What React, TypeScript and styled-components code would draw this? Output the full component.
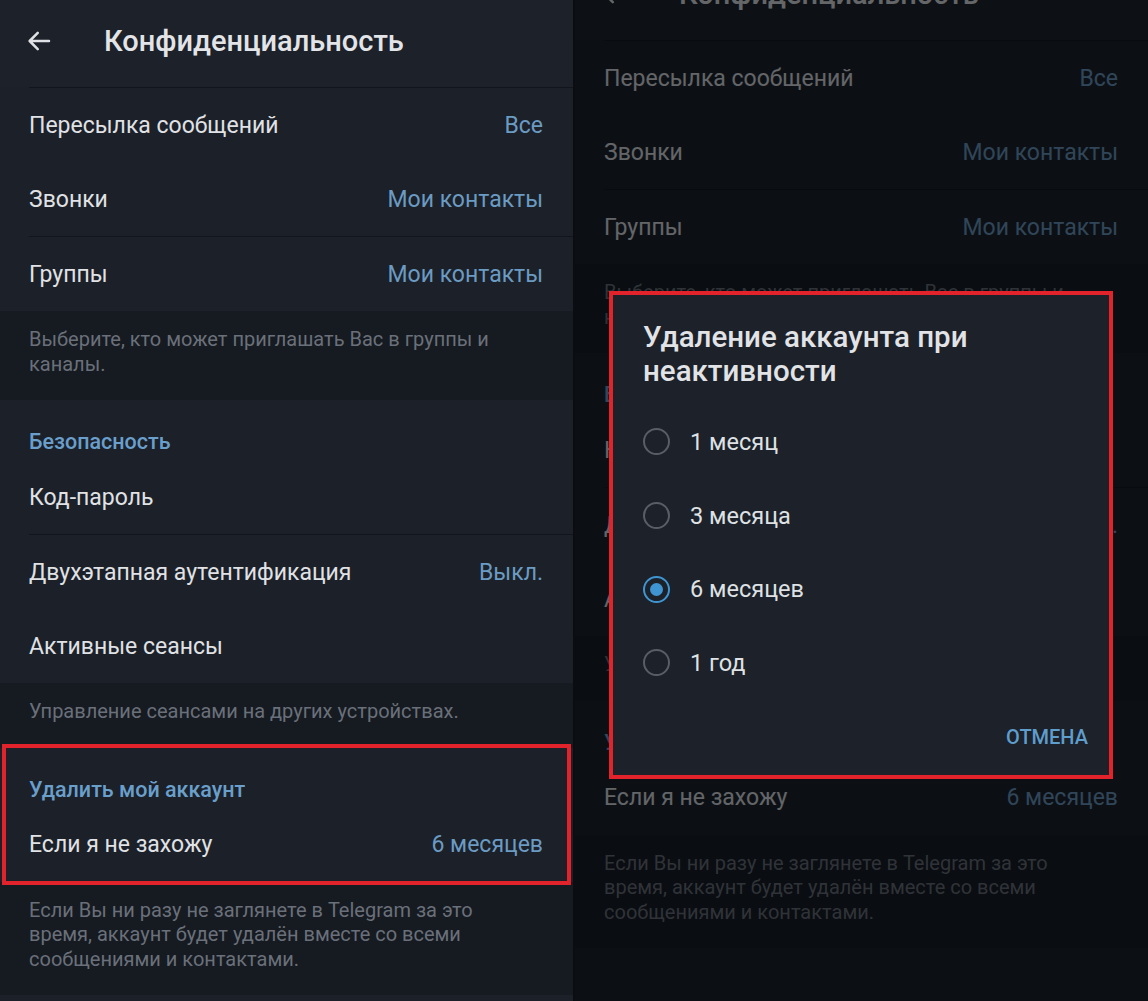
import React from 'react';
import styled, { createGlobalStyle } from 'styled-components';

const GlobalStyle = createGlobalStyle`
  html, body {
    margin: 0;
    padding: 0;
    background: #0b0d11;
  }
  body {
    font-family: Roboto, 'Noto Sans', 'Liberation Sans', sans-serif;
    -webkit-font-smoothing: antialiased;
  }
`;

const Page = styled.div`
  display: flex;
  flex-direction: row;
  gap: 2px;
  width: 1148px;
  height: 1001px;
  overflow: hidden;
  background: #0b0d11;
`;

const Phone = styled.div`
  position: relative;
  width: 573px;
  height: 1001px;
  overflow: hidden;
  background: #161a21;
`;

const Screen = styled.div<{ $offset: number }>`
  display: flex;
  flex-direction: column;
  margin-top: ${(p) => -p.$offset}px;
`;

const Header = styled.div`
  display: flex;
  align-items: center;
  box-sizing: border-box;
  height: 87px;
  padding: 0 0 5px 24px;
  background: #1c212a;
`;

const BackButton = styled.div`
  display: flex;
  align-items: center;
  width: 30px;
  height: 30px;
  margin-right: 50px;
  color: #dfe1e4;
`;

const Title = styled.h1`
  margin: 0;
  font-size: 29px;
  font-weight: 500;
  color: #e2e4e7;
`;

const Section = styled.div<{ $highlight?: boolean }>`
  position: relative;
  display: flex;
  flex-direction: column;
  background: #1b2029;
  &::after {
    content: '';
    display: ${(p) => (p.$highlight ? 'block' : 'none')};
    position: absolute;
    top: -4px;
    bottom: -3px;
    left: 2px;
    right: 2px;
    border: 4px solid #e3232b;
    pointer-events: none;
  }
`;

const SectionHeader = styled.div`
  padding: 30px 29px 6px;
  line-height: 24px;
  font-size: 21.5px;
  font-weight: 500;
  color: #6a9fcb;
`;

const Row = styled.div`
  display: flex;
  align-items: center;
  justify-content: space-between;
  height: 74px;
  padding: 0 30px 0 29px;
`;

const RowLabel = styled.span`
  font-size: 23px;
  color: #e0e2e5;
`;

const RowValue = styled.span`
  font-size: 23px;
  color: #6b9bc2;
`;

const Divider = styled.div`
  height: 1px;
  margin-left: 29px;
  background: #12161c;
`;

const Info = styled.div`
  padding: 16px 30px 24px 29px;
  font-size: 20px;
  line-height: 24.5px;
  color: #6a707a;
  background: #161a21;
`;

const Overlay = styled.div`
  position: absolute;
  inset: 0;
  background: rgba(2, 3, 5, 0.56);
`;

const Dialog = styled.div`
  position: absolute;
  left: 34px;
  top: 291px;
  width: 504px;
  height: 488px;
  box-sizing: border-box;
  display: flex;
  flex-direction: column;
  padding: 25px 21px 0 30px;
  background: #1c212a;
  border: 4px solid #e3232b;
`;

const DialogTitle = styled.h2`
  flex-shrink: 0;
  margin: 0 0 17px;
  font-size: 29.5px;
  line-height: 34px;
  font-weight: 500;
  color: #e1e3e6;
`;

const Option = styled.div`
  display: flex;
  flex-shrink: 0;
  align-items: center;
  height: 73.7px;
`;

const Radio = styled.span<{ $checked?: boolean }>`
  display: flex;
  align-items: center;
  justify-content: center;
  box-sizing: border-box;
  width: 27px;
  height: 27px;
  margin-right: 20px;
  border-radius: 50%;
  border: 2.5px solid ${(p) => (p.$checked ? '#3f95d1' : '#595e66')};
  &::after {
    content: '';
    display: ${(p) => (p.$checked ? 'block' : 'none')};
    width: 13px;
    height: 13px;
    border-radius: 50%;
    background: #3f95d1;
  }
`;

const OptionLabel = styled.span`
  font-size: 23.5px;
  color: #dfe1e4;
`;

const DialogActions = styled.div`
  display: flex;
  flex: 1;
  justify-content: flex-end;
  align-items: center;
`;

const TextButton = styled.span`
  font-size: 20px;
  font-weight: 500;
  color: #5f9dcc;
`;

const BackArrow = () => (
  <svg width="30" height="30" viewBox="0 0 24 24" fill="none">
    <path
      d="M20 12H4.5M11 5.5 4.5 12l6.5 6.5"
      stroke="currentColor"
      strokeWidth="2"
      strokeLinecap="round"
      strokeLinejoin="round"
    />
  </svg>
);

const SettingsScreen = ({
  offset,
  highlight,
}: {
  offset: number;
  highlight?: boolean;
}) => (
  <Screen $offset={offset}>
    <Header>
      <BackButton>
        <BackArrow />
      </BackButton>
      <Title>Конфиденциальность</Title>
    </Header>
    <Section>
      <Divider />
      <Row>
        <RowLabel>Пересылка сообщений</RowLabel>
        <RowValue>Все</RowValue>
      </Row>
      <Row>
        <RowLabel>Звонки</RowLabel>
        <RowValue>Мои контакты</RowValue>
      </Row>
      <Divider />
      <Row>
        <RowLabel>Группы</RowLabel>
        <RowValue>Мои контакты</RowValue>
      </Row>
    </Section>
    <Info>
      Выберите, кто может приглашать Вас в группы и
      <br />
      каналы.
    </Info>
    <Section>
      <SectionHeader>Безопасность</SectionHeader>
      <Row>
        <RowLabel>Код-пароль</RowLabel>
      </Row>
      <Divider />
      <Row>
        <RowLabel>Двухэтапная аутентификация</RowLabel>
        <RowValue>Выкл.</RowValue>
      </Row>
      <Row>
        <RowLabel>Активные сеансы</RowLabel>
      </Row>
    </Section>
    <Info>Управление сеансами на других устройствах.</Info>
    <Section $highlight={highlight}>
      <SectionHeader>Удалить мой аккаунт</SectionHeader>
      <Row>
        <RowLabel>Если я не захожу</RowLabel>
        <RowValue>6 месяцев</RowValue>
      </Row>
    </Section>
    <Info>
      Если Вы ни разу не заглянете в Telegram за это
      <br />
      время, аккаунт будет удалён вместе со всеми
      <br />
      сообщениями и контактами.
    </Info>
    <Section style={{ height: 120 }} />
  </Screen>
);

const periods = ['1 месяц', '3 месяца', '6 месяцев', '1 год'];

export default function App() {
  return (
    <>
      <GlobalStyle />
      <Page>
        <Phone>
          <SettingsScreen offset={0} highlight />
        </Phone>
        <Phone>
          <SettingsScreen offset={47} />
          <Overlay>
            <Dialog>
              <DialogTitle>
                Удаление аккаунта при
                <br />
                неактивности
              </DialogTitle>
              {periods.map((p) => (
                <Option key={p}>
                  <Radio $checked={p === '6 месяцев'} />
                  <OptionLabel>{p}</OptionLabel>
                </Option>
              ))}
              <DialogActions>
                <TextButton>ОТМЕНА</TextButton>
              </DialogActions>
            </Dialog>
          </Overlay>
        </Phone>
      </Page>
    </>
  );
}
